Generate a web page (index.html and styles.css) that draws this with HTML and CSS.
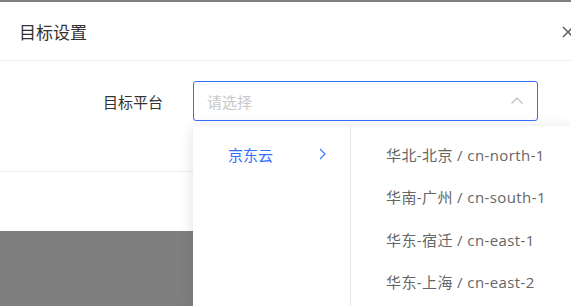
FILE: index.html
```html
<!DOCTYPE html>
<html lang="zh-CN">
  <head>
    <meta charset="UTF-8" />
    <meta name="viewport" content="width=device-width, initial-scale=1" />
    <title>目标设置</title>
    <link rel="stylesheet" href="styles.css">
  </head>
  <body>
    <div class="dialog">
      <div class="dialog-header">
        <span class="dialog-title">目标设置</span>
        <span class="dialog-close">
          <svg width="12" height="12" viewBox="0 0 12 12">
            <path d="M1 1L11 11M11 1L1 11" stroke="#555" stroke-width="1.3" fill="none" />
          </svg>
        </span>
      </div>

      <!-- Formular: nur eine Zeile -->
      <div class="dialog-body">
        <div class="form-row">
          <label class="form-label">目标平台</label>
          <div class="select is-open">
            <span class="select-placeholder">请选择</span>
            <svg class="select-arrow" width="12" height="7" viewBox="0 0 12 7">
              <path d="M0.5 6.5L6 1L11.5 6.5" stroke="#bbb" stroke-width="1.1" fill="none" />
            </svg>
          </div>
        </div>
      </div>

      <div class="dialog-footer"></div>

      <!-- Kaskaden-Menü -->
      <div class="cascader">
        <ul class="cascader-col first">
          <li class="active">
            <span>京东云</span>
            <svg width="7" height="12" viewBox="0 0 7 12">
              <path d="M1 1L6 6L1 11" stroke="#3370ff" stroke-width="1.1" fill="none" />
            </svg>
          </li>
        </ul>
        <ul class="cascader-col second">
          <li>华北-北京 / cn-north-1</li>
          <li>华南-广州 / cn-south-1</li>
          <li>华东-宿迁 / cn-east-1</li>
          <li>华东-上海 / cn-east-2</li>
        </ul>
      </div>
    </div>
  </body>
</html>
```

FILE: styles.css
```css
html {
  font-size: 15px;
  overflow: hidden;
}
body {
  margin: 0;
  min-height: 306px;
  background: #7f7f7f;
  font-family: "Open Sans", "Noto Sans CJK SC", sans-serif;
  color: #333;
}
ul {
  list-style: none;
  margin: 0;
  padding: 0;
}
.dialog {
  position: relative;
  margin-top: 2px;
  width: 594px;
  background: #fff;
}
.dialog-header {
  display: flex;
  align-items: center;
  justify-content: space-between;
  height: 58px;
  padding: 0 20px 0 19px;
  border-bottom: 1px solid #ebebeb;
}
.dialog-title {
  font-size: 17px;
  color: #333;
}
.dialog-close {
  display: flex;
  margin-top: 2px;
}
.dialog-body {
  height: 110px;
  border-bottom: 1px solid #ebebeb;
}
.form-row {
  display: flex;
  align-items: center;
  padding-top: 20px;
}
.form-label {
  width: 163px;
  margin-right: 30px;
  text-align: right;
  font-size: 15px;
  color: #333;
}
.select {
  display: flex;
  align-items: center;
  justify-content: space-between;
  box-sizing: border-box;
  width: 345px;
  height: 40px;
  padding: 0 14px 0 13px;
  border: 1px solid #ccc;
  border-radius: 3px;
}
.select.is-open {
  border-color: #3370ff;
}
.select-placeholder {
  color: #c8c8c8;
  font-size: 15px;
}
.select-arrow {
  margin-top: -2px;
}
.dialog-footer {
  height: 59px;
}

/* ----- Kaskaden-Dropdown ----- */
.cascader {
  position: absolute;
  top: 124px;
  left: 193px;
  display: flex;
  height: 182px;
  background: #fff;
  box-shadow: 0 2px 14px rgba(0, 0, 0, 0.12);
}
.cascader-col {
  padding-top: 7px;
}
.cascader-col li {
  display: flex;
  align-items: center;
  height: 42.5px;
  font-size: 15px;
  color: #666;
  white-space: nowrap;
}
.cascader-col.first {
  width: 157px;
  border-right: 1px solid #e6e6e6;
}
.cascader-col.first li {
  justify-content: space-between;
  padding: 0 24px 0 35px;
}
.cascader-col.first li.active {
  color: #3370ff;
}
.cascader-col.second {
  width: 220px;
}
.cascader-col.second li {
  padding-left: 35px;
  letter-spacing: 0.4px;
}
```
